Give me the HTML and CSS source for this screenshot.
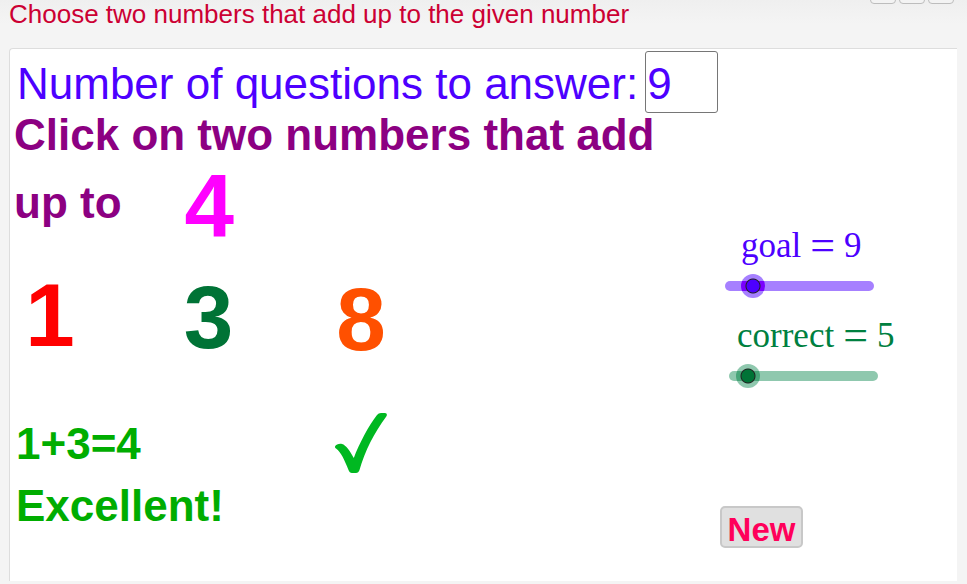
FILE: index.html
```html
<!DOCTYPE html>
<html lang="en">
<head>
<meta charset="utf-8">
<title>Adding numbers</title>
<link rel="stylesheet" href="styles.css">
</head>
<body>
<header class="header">
  <h1 class="title">Choose two numbers that add up to the given number</h1>
  <div class="toolbar">
    <button class="tool" type="button" aria-label="Undo"></button>
    <button class="tool" type="button" aria-label="Redo"></button>
    <button class="tool" type="button" aria-label="Reset"></button>
  </div>
</header>
<main class="board">
  <section class="quiz">
    <div class="count">
      <label for="count">Number of questions to answer:</label>
      <input class="count-input" id="count" type="text" value="9">
    </div>
    <p class="prompt">Click on two numbers that add</p>
    <div class="target">
      <p class="prompt target-text">up to</p>
      <span class="digit magenta">4</span>
    </div>
    <div class="choices">
      <button class="digit red" type="button">1</button>
      <button class="digit green" type="button">3</button>
      <button class="digit orange" type="button">8</button>
    </div>
    <div class="feedback">
      <div class="result">
        <p>1+3=4</p>
        <p>Excellent!</p>
      </div>
      <svg class="check" viewBox="0 0 52 60" aria-hidden="true">
        <path d="M0 33.5 C1 31.5 4 30.5 7 31 C11 32 15 38 18.8 45 C24 31 34 12 42 2 Q43.5 0 46 0 L50 0 Q53 .5 51.3 3.500 C39 20 30 38 24.500 57 Q23.500 60 21 60 L17 60 Q14.500 60 13.500 57 C9.500 47 6 39 1 35.500 Q-.3 34.500 0 33.500 Z"/>
      </svg>
    </div>
  </section>
  <aside class="side">
    <div class="slider goal">
      <label class="slider-label" for="goal"><span>goal</span><span class="equals">=</span><span>9</span></label>
      <input id="goal" type="range" min="0" max="70" value="9">
    </div>
    <div class="slider correct">
      <label class="slider-label" for="correct"><span>correct</span><span class="equals">=</span><span>5</span></label>
      <input id="correct" type="range" min="0" max="89" value="5">
    </div>
    <button class="new" type="button">New</button>
  </aside>
</main>
</body>
</html>
```
FILE: styles.css
```css
* {
  box-sizing: border-box;
}

body {
  margin: 0;
  background: linear-gradient(#efefef, #f4f4f4 24px);
  font-family: "Liberation Sans", Arial, sans-serif;
}

h1,
p {
  margin: 0;
}

button {
  margin: 0;
  padding: 0;
  border: 0;
  background: none;
  font-family: inherit;
  cursor: pointer;
}

.header {
  display: flex;
  justify-content: space-between;
  align-items: flex-start;
  height: 48px;
  padding: 0 13px 0 9px;
}

.title {
  color: #cc0033;
  font-size: 26px;
  font-weight: 400;
  line-height: 28px;
  white-space: nowrap;
}

.toolbar {
  display: flex;
  gap: 3px;
  margin-top: -22px;
}

.tool {
  width: 26px;
  height: 26px;
  border: 1px solid #bdbdbd;
  border-radius: 4px;
  background: #f3f3f3;
}

.board {
  display: grid;
  grid-template-columns: minmax(0, 1fr) 237px;
  min-height: 533px;
  margin: 0 10px 3px 9px;
  padding-top: 2px;
  border-top: 1px solid #ddd;
  border-left: 1px solid #ddd;
  border-top-left-radius: 4px;
  background: #fff;
}

.quiz {
  padding-left: 4px;
  font-size: 44px;
  line-height: 44px;
  white-space: nowrap;
}

.count {
  display: flex;
  align-items: center;
  gap: 7px;
  padding-left: 3px;
  color: #4d00ff;
}

.count label {
  padding-top: 3px;
}

.count-input {
  width: 73px;
  height: 62px;
  padding: 3px 1px 0;
  border: 1px solid #767676;
  border-radius: 3px;
  background: #fff;
  color: inherit;
  font: inherit;
}

.prompt {
  color: #8c0082;
  font-weight: 700;
}

.target {
  display: flex;
  align-items: flex-start;
  gap: 63px;
  margin-top: 9px;
}

.target-text {
  padding-top: 15px;
}

.digit {
  font-size: 89px;
  font-weight: 700;
  line-height: 80px;
}

.magenta { color: #ff00ff; }
.red { color: #ff0000; }
.green { color: #007336; }
.orange { color: #ff5000; }

.choices,
.feedback {
  display: grid;
  grid-template-columns: 72px 245px 60px;
  justify-items: center;
}

.choices {
  height: 84px;
  margin-top: 29px;
}

.choices .red { align-self: start; }
.choices .green { align-self: center; }
.choices .orange { align-self: end; }

.feedback {
  margin-top: 54px;
}

.result {
  display: grid;
  grid-column: span 2;
  justify-self: start;
  gap: 18px;
  padding: 9px 0 0 2px;
  color: #00ad00;
  font-weight: 700;
}

.check {
  width: 52px;
  height: 60px;
  fill: #00b821;
}

.side {
  display: flex;
  flex-direction: column;
  align-items: flex-start;
  padding-top: 175px;
}

.slider {
  display: flex;
  flex-direction: column;
  height: 90px;
}

.goal {
  --color: #4d00ff;
  --halo: #7a00ff;
  --ring: #a680ff;
  --track: #a680ff;
  margin-left: 5px;
}

.correct {
  --color: #007336;
  --halo: #47a578;
  --ring: #8fc8ae;
  --track: #8fc8ae;
  margin-left: 9px;
}

.slider-label {
  display: flex;
  align-items: center;
  gap: 9px;
  height: 40px;
  padding-left: 16px;
  color: var(--color);
  font-family: "Liberation Serif", serif;
  font-size: 35px;
  line-height: 40px;
  white-space: nowrap;
}

.equals {
  font-size: 44px;
}

.correct .slider-label {
  padding-left: 8px;
  color: #00803f;
}

.slider input {
  -webkit-appearance: none;
  appearance: none;
  width: 149px;
  height: 24px;
  margin: 8px 0 0;
  background: none;
}

.slider input::-webkit-slider-runnable-track {
  height: 10px;
  border-radius: 5px;
  background: var(--track);
}

.slider input::-webkit-slider-thumb {
  -webkit-appearance: none;
  width: 24px;
  height: 24px;
  margin-top: -7px;
  border-radius: 50%;
  background:
    radial-gradient(circle, var(--color) 6px, #222 7px, #222 7px, transparent 8px),
    linear-gradient(var(--ring) 7px, var(--halo) 7px 17px, var(--ring) 17px);
}

.new {
  width: 83px;
  height: 42px;
  margin-top: 100px;
  padding-top: 3px;
  border: 2px solid #c8c8c8;
  border-radius: 5px;
  background: #e0e0e0;
  color: #ff005a;
  font-size: 33px;
  font-weight: 700;
  line-height: 38px;
}
```
